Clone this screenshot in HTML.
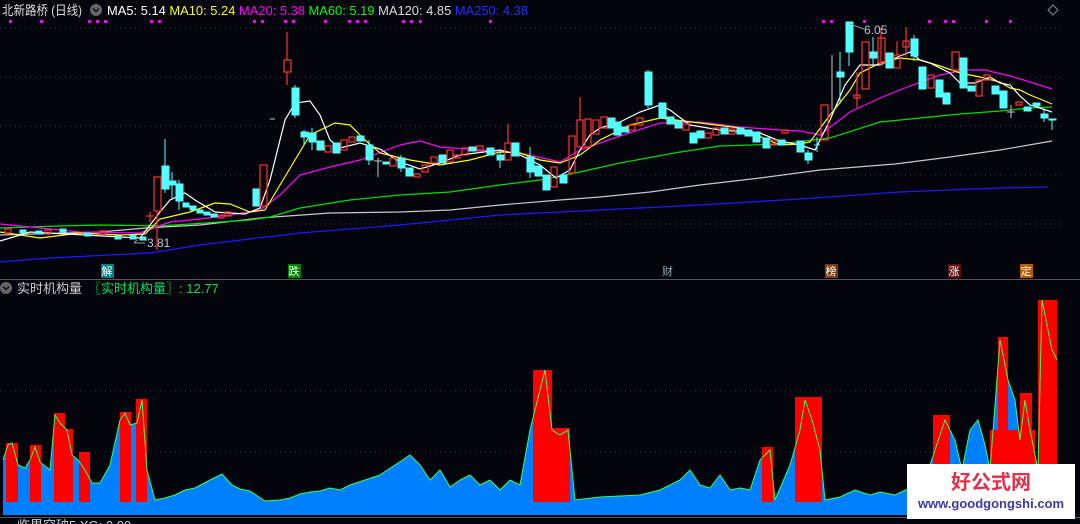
<!DOCTYPE html>
<html><head><meta charset="utf-8"><style>
html,body{margin:0;padding:0;background:#04040c;width:1080px;height:524px;overflow:hidden}
svg{display:block}
text{font-family:"Liberation Sans","Noto Sans CJK SC",sans-serif}
</style></head><body>
<svg width="1080" height="524" viewBox="0 0 1080 524" xmlns="http://www.w3.org/2000/svg">
<rect width="1080" height="524" fill="#04040c"/>
<g stroke="#3a3a44" stroke-dasharray="1,4" stroke-width="1">
<line x1="0" y1="28" x2="1065" y2="28"/><line x1="0" y1="77" x2="1065" y2="77"/>
<line x1="0" y1="126" x2="1065" y2="126"/><line x1="0" y1="175" x2="1065" y2="175"/>
<line x1="0" y1="224" x2="1065" y2="224"/>
<line x1="0" y1="391" x2="1065" y2="391"/><line x1="0" y1="452" x2="1065" y2="452"/>
</g>
<line x1="0" y1="279.5" x2="1080" y2="279.5" stroke="#55555c"/>
<line x1="0" y1="517.5" x2="1080" y2="517.5" stroke="#55555c"/>
<text x="2" y="15" font-size="13" fill="#dcdcdc" textLength="80" lengthAdjust="spacingAndGlyphs">北新路桥 (日线)</text>
<circle cx="96" cy="10" r="6" fill="#666"/><path d="M93 8.5l3 3 3-3" stroke="#111" stroke-width="1.5" fill="none"/>
<text x="107" y="15" font-size="13" textLength="421" lengthAdjust="spacingAndGlyphs"><tspan fill="#fff">MA5: 5.14 </tspan><tspan fill="#ffff00">MA10: 5.24 </tspan><tspan fill="#ff00ff">MA20: 5.38 </tspan><tspan fill="#00ff00">MA60: 5.19 </tspan><tspan fill="#dcdcdc">MA120: 4.85 </tspan><tspan fill="#2030ff">MA250: 4.38</tspan></text>
<path d="M1053 5l5 5-5 5-5-5z" stroke="#888" fill="none"/>
<g fill="#ff00ff">
<rect x="9" y="20" width="3" height="3"/><rect x="40" y="20" width="3" height="3"/><rect x="88" y="20" width="3" height="3"/><rect x="96" y="20" width="3" height="3"/><rect x="104" y="20" width="3" height="3"/><rect x="150" y="20" width="3" height="3"/><rect x="158" y="20" width="3" height="3"/><rect x="253" y="20" width="3" height="3"/><rect x="261" y="20" width="3" height="3"/><rect x="284" y="20" width="3" height="3"/><rect x="292" y="20" width="3" height="3"/><rect x="324" y="20" width="3" height="3"/><rect x="348" y="20" width="3" height="3"/><rect x="356" y="20" width="3" height="3"/><rect x="364" y="20" width="3" height="3"/><rect x="402" y="20" width="3" height="3"/><rect x="410" y="20" width="3" height="3"/><rect x="419" y="20" width="3" height="3"/><rect x="489" y="20" width="3" height="3"/><rect x="822" y="20" width="3" height="3"/><rect x="830" y="20" width="3" height="3"/><rect x="863" y="20" width="3" height="3"/><rect x="928" y="20" width="3" height="3"/><rect x="944" y="20" width="3" height="3"/><rect x="952" y="20" width="3" height="3"/><rect x="985" y="20" width="3" height="3"/><rect x="1009" y="20" width="3" height="3"/>
</g>
<g fill="none" stroke-width="1.2">
<polyline stroke="#1a1aff" points="0,262 50,258 150,253 200,245 300,233 400,225 500,215 600,210 700,205 800,199 900,192 1000,188 1048,187"/>
<polyline stroke="#c8c8c8" points="0,235 100,232 145,228 200,225 260,218 330,213 400,212 450,210 500,205 560,200 600,197 650,192 700,185 760,178 820,170 895,164 950,157 1000,150 1052,141"/>
<polyline stroke="#00e000" points="0,228 60,226 100,225 160,226 250,220 270,217 300,208 350,200 400,195 450,192 500,185 540,180 580,172 620,163 680,152 720,146 780,144 830,138 880,122 930,117 960,114 1000,111 1030,108 1052,107"/>
<polyline stroke="#ff00ff" points="0,224 40,228 80,232 140,233 170,222 200,219 230,215 260,210 280,195 300,175 330,167 360,160 400,145 420,141 440,147 480,150 520,153 560,162 580,150 620,136 660,123 700,122 740,127 780,130 800,131 820,135 850,112 880,98 910,86 940,75 965,70 985,70 1010,76 1030,82 1052,89"/>
<polyline stroke="#ffff00" points="0,232 40,238 80,233 120,235 145,234 160,219 190,212 215,203 230,204 250,212 265,210 280,185 295,160 310,135 335,123 350,125 365,140 380,153 410,160 440,165 470,160 500,152 520,153 540,160 560,163 580,155 600,140 630,125 660,118 700,123 740,128 780,145 800,144 810,142 830,115 850,90 860,73 880,63 900,58 920,60 940,66 960,73 980,77 1000,82 1010,88 1020,90 1030,95 1040,99 1052,104"/>
<polyline stroke="#ffffff" points="0,241 30,232 140,238 160,212 170,200 185,193 195,200 215,212 245,214 260,208 270,180 285,120 295,103 310,101 320,115 330,140 340,148 360,143 380,149 400,162 420,169 440,163 460,155 500,150 520,155 540,165 556,178 570,170 580,150 590,135 600,128 620,122 640,112 660,105 670,110 690,125 720,130 760,133 780,141 800,145 815,150 830,120 845,85 860,65 880,65 900,56 910,52 920,60 930,63 940,68 950,73 960,83 975,83 990,77 1000,83 1010,85 1020,96 1030,105 1040,108 1052,112"/>
</g>
<g stroke="#54ffff" fill="#54ffff" stroke-width="1">
<line x1="165" y1="139" x2="165" y2="193"/><rect x="162" y="166" width="7" height="23"/>
<rect x="169" y="181" width="7" height="4"/><line x1="172" y1="172" x2="172" y2="200"/>
<rect x="176" y="184" width="7" height="17"/><line x1="179" y1="180" x2="179" y2="210"/>
<rect x="183" y="203" width="6" height="4"/><rect x="190" y="206" width="6" height="4"/><rect x="197" y="210" width="6" height="3"/><rect x="204" y="212" width="6" height="3"/><rect x="211" y="214" width="6" height="3"/>
<rect x="20" y="230" width="6" height="3"/><rect x="36" y="231" width="6" height="3"/><rect x="60" y="229" width="6" height="3"/><rect x="85" y="233" width="6" height="3"/><rect x="115" y="236" width="6" height="3"/><rect x="130" y="235" width="6" height="4"/><rect x="140" y="237" width="6" height="3"/>
<rect x="253" y="189" width="7" height="17"/>
<rect x="292" y="88" width="7" height="27"/><line x1="295" y1="85" x2="295" y2="118"/>
<rect x="301" y="132" width="7" height="5"/><line x1="304" y1="130" x2="304" y2="145"/>
<rect x="309" y="133" width="7" height="9"/><line x1="312" y1="128" x2="312" y2="150"/>
<rect x="317" y="141" width="7" height="9"/><rect x="333" y="143" width="7" height="10"/><rect x="357" y="136" width="7" height="5"/>
<rect x="366" y="145" width="7" height="15"/><line x1="369" y1="140" x2="369" y2="165"/>
<rect x="383" y="162" width="6" height="2"/><rect x="398" y="158" width="7" height="10"/><line x1="401" y1="155" x2="401" y2="172"/>
<rect x="406" y="168" width="7" height="8"/><rect x="439" y="155" width="7" height="8"/><rect x="469" y="147" width="7" height="4"/>
<rect x="487" y="148" width="7" height="7"/><rect x="497" y="155" width="7" height="5"/><line x1="500" y1="150" x2="500" y2="168"/>
<rect x="512" y="143" width="7" height="13"/>
<rect x="527" y="157" width="7" height="15"/><line x1="530" y1="147" x2="530" y2="178"/>
<rect x="535" y="166" width="7" height="10"/><rect x="543" y="175" width="7" height="15"/><rect x="560" y="175" width="7" height="8"/>
<rect x="608" y="118" width="7" height="10"/><rect x="614" y="122" width="7" height="13"/><rect x="622" y="127" width="7" height="5"/>
<rect x="645" y="72" width="7" height="33"/><line x1="648" y1="70" x2="648" y2="108"/>
<rect x="659" y="103" width="7" height="15"/><rect x="667" y="117" width="7" height="7"/><rect x="675" y="121" width="7" height="7"/>
<rect x="690" y="133" width="7" height="10"/><rect x="697" y="131" width="7" height="7"/><rect x="721" y="128" width="7" height="6"/><rect x="737" y="128" width="7" height="6"/><rect x="745" y="130" width="7" height="6"/><rect x="753" y="132" width="7" height="10"/><rect x="763" y="138" width="7" height="10"/><rect x="778" y="140" width="7" height="5"/>
<rect x="797" y="141" width="7" height="11"/><rect x="805" y="153" width="7" height="7"/><line x1="808" y1="150" x2="808" y2="164"/>
<line x1="817" y1="137" x2="817" y2="152"/><line x1="814" y1="145" x2="820" y2="145"/>
<rect x="837" y="72" width="7" height="5"/><line x1="840" y1="52" x2="840" y2="104"/>
<rect x="846" y="22" width="7" height="30"/><line x1="849" y1="22" x2="849" y2="66"/>
<rect x="870" y="52" width="7" height="6"/><line x1="873" y1="37" x2="873" y2="65"/>
<rect x="886" y="53" width="7" height="15"/><rect x="911" y="39" width="7" height="17"/><line x1="914" y1="35" x2="914" y2="61"/>
<rect x="919" y="67" width="7" height="22"/><rect x="936" y="80" width="7" height="17"/><rect x="943" y="93" width="7" height="11"/>
<rect x="960" y="58" width="7" height="30"/><rect x="968" y="86" width="7" height="5"/><rect x="992" y="86" width="7" height="8"/>
<rect x="1000" y="91" width="7" height="17"/><rect x="1024" y="107" width="7" height="4"/><rect x="1033" y="103" width="7" height="3"/>
<rect x="1041" y="114" width="7" height="4"/><line x1="1044" y1="110" x2="1044" y2="122"/>
<rect x="1049" y="119" width="7" height="1"/><line x1="1052" y1="119" x2="1052" y2="130"/>
</g>
<g stroke="#ff3232" fill="none" stroke-width="1.2">
<rect x="5" y="229" width="6" height="4"/><rect x="45" y="230" width="6" height="4"/><rect x="100" y="231" width="6" height="3"/>
<line x1="150" y1="212" x2="150" y2="222"/><line x1="146" y1="216" x2="154" y2="216"/>
<rect x="154" y="177" width="7" height="34"/><line x1="157" y1="211" x2="157" y2="250"/>
<rect x="218" y="215" width="6" height="3"/><rect x="225" y="212" width="6" height="4"/>
<rect x="260" y="165" width="7" height="41"/>
<rect x="284" y="60" width="7" height="12"/><line x1="287" y1="32" x2="287" y2="60"/><line x1="287" y1="72" x2="287" y2="85"/>
<rect x="325" y="146" width="6" height="6"/><rect x="341" y="140" width="6" height="10"/><rect x="349" y="137" width="6" height="5"/>
<rect x="390" y="158" width="6" height="8"/><rect x="414" y="174" width="6" height="3"/><rect x="422" y="165" width="6" height="7"/><rect x="431" y="157" width="6" height="6"/>
<rect x="447" y="150" width="6" height="12"/><rect x="454" y="155" width="6" height="3"/><rect x="462" y="148" width="6" height="7"/><rect x="477" y="146" width="6" height="5"/>
<rect x="505" y="143" width="6" height="17"/><line x1="508" y1="124" x2="508" y2="143"/>
<rect x="551" y="167" width="6" height="20"/><rect x="569" y="136" width="6" height="37"/>
<rect x="577" y="120" width="6" height="27"/><line x1="580" y1="97" x2="580" y2="120"/>
<rect x="585" y="119" width="6" height="28"/><rect x="593" y="120" width="6" height="14"/><rect x="601" y="117" width="6" height="11"/>
<rect x="629" y="125" width="6" height="5"/><rect x="637" y="118" width="6" height="7"/><rect x="683" y="124" width="6" height="6"/>
<rect x="705" y="133" width="6" height="5"/><rect x="713" y="128" width="6" height="7"/><rect x="729" y="129" width="6" height="5"/><rect x="770" y="140" width="6" height="5"/><rect x="782" y="130" width="6" height="3"/>
<rect x="821" y="105" width="7" height="35"/>
<rect x="854" y="95" width="6" height="3"/><line x1="857" y1="72" x2="857" y2="108"/>
<rect x="862" y="42" width="7" height="47"/>
<rect x="878" y="38" width="7" height="25"/><line x1="881" y1="28" x2="881" y2="66"/>
<rect x="894" y="55" width="6" height="13"/><line x1="897" y1="41" x2="897" y2="55"/>
<rect x="903" y="41" width="6" height="6"/><line x1="906" y1="27" x2="906" y2="57"/>
<rect x="928" y="75" width="6" height="13"/><rect x="952" y="52" width="7" height="18"/>
<rect x="976" y="80" width="6" height="16"/><rect x="984" y="75" width="6" height="5"/><rect x="1016" y="102" width="6" height="3"/>
</g>
<line x1="832" y1="55" x2="832" y2="110" stroke="#c8c8c8"/><line x1="270" y1="119" x2="275" y2="119" stroke="#c8c8c8"/>
<line x1="378" y1="158" x2="378" y2="177" stroke="#c8c8c8"/><line x1="374" y1="161" x2="382" y2="161" stroke="#c8c8c8"/>
<line x1="1011" y1="105" x2="1011" y2="118" stroke="#c8c8c8"/><line x1="1007" y1="112" x2="1015" y2="112" stroke="#c8c8c8"/>
<text x="864" y="34" font-size="12" fill="#b8c8d8">6.05</text><path d="M850 24l14 5" stroke="#999"/>
<text x="147" y="247" font-size="12" fill="#b8c8d8">3.81</text><path d="M134 243h11M134 243l3-3" stroke="#999" fill="none"/>
<g font-size="11">
<rect x="101" y="264" width="13" height="14" fill="#008080"/><text x="101.5" y="275" fill="#fff">解</text>
<rect x="288" y="264" width="13" height="14" fill="#008000"/><text x="288.5" y="275" fill="#fff">跌</text>
<text x="662" y="275" fill="#9ab">财</text>
<rect x="825" y="264" width="13" height="14" fill="#7a3a10"/><text x="825.5" y="275" fill="#fff">榜</text>
<rect x="948" y="264" width="13" height="14" fill="#5a1010"/><text x="948.5" y="275" fill="#fff">涨</text>
<rect x="1020" y="264" width="13" height="14" fill="#b85a00"/><text x="1020.5" y="275" fill="#fff">定</text>
</g>
<circle cx="6" cy="288" r="6" fill="#666"/><path d="M3 286.5l3 3 3-3" stroke="#111" stroke-width="1.5" fill="none"/>
<text x="17" y="293" font-size="13" fill="#cfcfcf">实时机构量</text>
<text x="88" y="293" font-size="13" fill="#00e060">〖实时机构量〗: 12.77</text>
<path fill="#0080ff" d="M3,515 L3,460 8,445 12,443 18,465 25,468 30,460 35,447 40,462 50,470 55,415 60,423 67,430 72,455 78,460 85,470 92,483 100,483 110,465 120,420 125,413 130,425 137,423 142,400 147,470 155,500 165,498 175,495 185,490 195,488 210,480 222,474 232,485 240,489 250,491 265,501 280,500 290,498 300,494 310,492 320,491 330,488 340,490 350,485 365,480 380,475 395,465 410,455 420,465 430,480 440,470 450,487 460,480 470,475 480,485 490,480 500,490 510,480 520,485 530,430 545,370 552,430 560,435 568,430 575,500 600,497 620,496 640,495 660,490 680,480 690,470 700,485 710,488 720,475 730,490 740,488 750,490 760,460 770,450 775,500 790,465 800,430 805,400 812,420 820,450 825,500 840,497 855,490 870,495 880,492 895,495 910,488 925,480 935,450 945,420 955,440 962,470 970,430 978,420 985,445 990,470 1000,340 1008,380 1015,400 1020,440 1025,400 1030,430 1038,470 1042,300 1048,330 1052,350 1057,360 1057,515 Z"/>
<g fill="#ff0000">
<rect x="6" y="443" width="12" height="59"/><rect x="30" y="445" width="11" height="57"/><rect x="54" y="413" width="11" height="89"/><rect x="65" y="429" width="8" height="73"/><rect x="79" y="452" width="11" height="50"/>
<rect x="120" y="412" width="11" height="90"/><rect x="136" y="399" width="11" height="103"/>
<rect x="533" y="370" width="19" height="132"/><rect x="552" y="428" width="18" height="74"/>
<rect x="762" y="447" width="11" height="55"/><rect x="795" y="397" width="27" height="105"/>
<rect x="933" y="415" width="17" height="87"/><rect x="990" y="430" width="45" height="72"/><rect x="998" y="337" width="10" height="165"/><rect x="1020" y="393" width="12" height="109"/><rect x="1038" y="300" width="19" height="202"/>
</g>
<polyline fill="none" stroke="#30ff60" stroke-width="1" points="3,460 8,445 12,443 18,465 25,468 30,460 35,447 40,462 50,470 55,415 60,423 67,430 72,455 78,460 85,470 92,483 100,483 110,465 120,420 125,413 130,425 137,423 142,400 147,470 155,500 165,498 175,495 185,490 195,488 210,480 222,474 232,485 240,489 250,491 265,501 280,500 290,498 300,494 310,492 320,491 330,488 340,490 350,485 365,480 380,475 395,465 410,455 420,465 430,480 440,470 450,487 460,480 470,475 480,485 490,480 500,490 510,480 520,485 530,430 545,370 552,430 560,435 568,430 575,500 600,497 620,496 640,495 660,490 680,480 690,470 700,485 710,488 720,475 730,490 740,488 750,490 760,460 770,450 775,500 790,465 800,430 805,400 812,420 820,450 825,500 840,497 855,490 870,495 880,492 895,495 910,488 925,480 935,450 945,420 955,440 962,470 970,430 978,420 985,445 990,470 1000,340 1008,380 1015,400 1020,440 1025,400 1030,430 1038,470 1042,300 1048,330 1052,350 1057,360"/>
<text x="17" y="530" font-size="13" fill="#cfcfcf">临界突破5 XG: 0.00</text>
<rect x="907" y="464" width="168" height="55" fill="#fff"/>
<text x="991" y="489" font-size="20" font-weight="bold" fill="#e0304a" text-anchor="middle">好公式网</text>
<text x="991" y="508" font-size="13" font-weight="bold" fill="#3a3aa0" text-anchor="middle">www.goodgongshi.com</text>
</svg>
</body></html>
